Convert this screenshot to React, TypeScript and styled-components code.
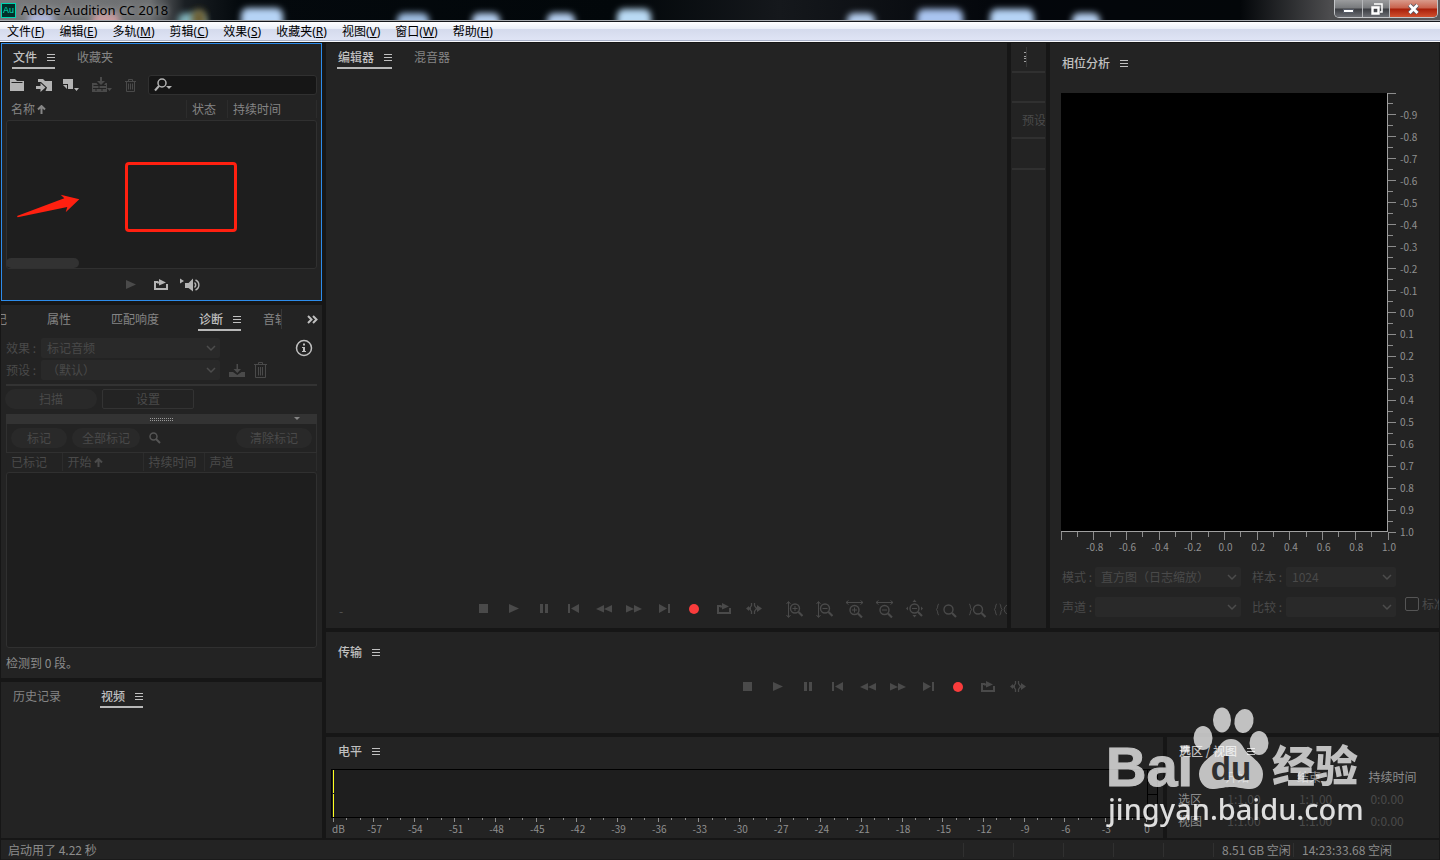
import React from "react";
import styled, { createGlobalStyle, css } from "styled-components";

const UI_FONT = `"Noto Sans CJK SC", "Noto Sans", sans-serif`;

const GlobalStyle = createGlobalStyle`
  *, *::before, *::after { box-sizing: border-box; }
  body { margin: 0; background: #161616; }
  body, button, input, select, table {
    font-family: ${UI_FONT};
    font-size: 12px;
    line-height: 20px;
  }
  button, input, select { margin: 0; padding: 0; border: 0; background: none; color: inherit; }
  svg { display: block; flex: none; }
`;

/* ---------- window frame ---------- */

const Window = styled.div`
  position: relative;
  display: flex;
  flex-direction: column;
  min-height: 100vh;
  color: #8c8c8c;
  background: #161616;
`;

const TitleBar = styled.header`
  position: relative;
  display: flex;
  align-items: center;
  height: 22px;
  padding: 0 2px 1px 1px;
  background: linear-gradient(90deg, #77797b 0, #6c6e70 150px, #1a1f23 185px, #04090d 240px, #02070a 620px, #15181c 780px, #03060b 1000px, #030609 1240px, #4c4c4e 1330px, #5a5a5c 100%);
  border-bottom: 1px solid #15171b;
  box-shadow: inset 0 -1px 0 #a6a9ad;
  overflow: hidden;
`;

const Wallpaper = styled.svg`
  position: absolute;
  left: 0;
  top: 0;
  width: 100%;
  height: 20px;
`;

const AppBadge = styled.span`
  position: relative;
  width: 15px;
  height: 15px;
  border: 1px solid #00d5b0;
  background: #01302a;
  color: #00e4bb;
  font-family: "Liberation Sans", sans-serif;
  font-size: 9px;
  line-height: 13px;
  text-align: center;
`;

const WindowTitle = styled.h1`
  position: relative;
  flex: 1;
  margin: 0 0 0 5px;
  color: #000;
  font: 400 13px/20px "Noto Sans", sans-serif;
  text-shadow: 0 0 6px rgba(255, 255, 255, 0.5);
`;

const WindowButtons = styled.div`
  position: relative;
  align-self: flex-start;
  display: flex;
  height: 18px;
  border: 1px solid #c3c5c8;
  border-top: 0;
  border-radius: 0 0 5px 5px;
  overflow: hidden;
`;

const WindowButton = styled.button<{ $close?: boolean }>`
  display: grid;
  place-items: center;
  width: ${(p) => (p.$close ? 48 : 27)}px;
  background: ${(p) =>
    p.$close
      ? "linear-gradient(#d99a8b 0, #c8614c 8px, #a81f0a 9px, #d0502e 100%)"
      : "linear-gradient(#9b9c9e 0, #77797c 8px, #3b3d42 9px, #6c6e74 100%)"};
  & + & { border-left: 1px solid #b5b7ba; }
`;

const MenuBar = styled.nav`
  display: flex;
  gap: 15px;
  height: 20px;
  padding-left: 7px;
  background: linear-gradient(#ffffff 0, #eaeef7 7px, #d4daec 7px, #dfe4f5 18px, #a9b2c9 18px, #a9b2c9 19px, #f7f8fb 19px);
`;

const MenuItem = styled.button`
  color: #000;
  font-family: "Noto Sans", "Noto Sans CJK SC", sans-serif;
  white-space: nowrap;
`;

const Workspace = styled.main`
  flex: 1;
  display: flex;
  gap: 4px;
  padding: 1px 1px 2px;
`;

const LeftColumn = styled.div`
  flex: 0 0 321px;
  min-width: 0;
  display: flex;
  flex-direction: column;
  gap: 4px;
`;

const MainColumn = styled.div`
  flex: 1;
  min-width: 0;
  display: flex;
  flex-direction: column;
  gap: 4px;
`;

const PanelRow = styled.div<{ $grow?: boolean }>`
  display: flex;
  gap: 4px;
  ${(p) => p.$grow && "flex: 1;"}
`;

const Panel = styled.section<{ $focused?: boolean; $grow?: boolean; $width?: number }>`
  display: flex;
  flex-direction: column;
  min-width: 0;
  overflow: hidden;
  background: #232323;
  ${(p) => p.$focused && css`border: 1px solid #2d8ceb;`}
  ${(p) => p.$grow && css`flex: 1;`}
  ${(p) => p.$width && css`flex: 0 0 ${p.$width}px;`}
`;

/* ---------- tabs ---------- */

const TabBar = styled.div<{ $scrolled?: boolean; $inset?: boolean }>`
  flex: none;
  display: flex;
  gap: 21px;
  height: ${(p) => (p.$inset ? 25 : 26)}px;
  padding-left: ${(p) => (p.$inset ? 10 : 11)}px;
  ${(p) => p.$scrolled && "flex: 1; padding-left: 0; overflow: hidden; justify-content: flex-end;"}
`;

const Tab = styled.button<{ $active?: boolean }>`
  flex: none;
  display: flex;
  align-items: flex-end;
  gap: 10px;
  height: 100%;
  padding-left: 1px;
  border-bottom: 2px solid ${(p) => (p.$active ? "#b8b8b8" : "transparent")};
  color: ${(p) => (p.$active ? "#c0c0c0" : "#858585")};
  font-weight: ${(p) => (p.$active ? 500 : 400)};
  white-space: nowrap;
  svg { visibility: ${(p) => (p.$active ? "visible" : "hidden")}; margin-bottom: 5px; }
`;

const PanelTitle = styled.h2<{ $tall?: boolean }>`
  display: flex;
  align-items: center;
  gap: 10px;
  margin: 0;
  padding: ${(p) => (p.$tall ? "10px 0 0 12px" : "4px 0 0 12px")};
  color: #c0c0c0;
  font-size: 12px;
  font-weight: 500;
  line-height: 20px;
`;

const TabOverflow = styled.div`
  display: flex;
  align-items: flex-start;
  height: 30px;
`;

const MoreButton = styled.button`
  flex: none;
  width: 41px;
  height: 20px;
  margin-top: 4px;
  padding-left: 25px;
  border-left: 1px solid #383838;
  color: #c0c0c0;
`;

/* ---------- shared controls ---------- */

const IconButton = styled.button<{ $dim?: boolean; $w?: number }>`
  flex: none;
  display: flex;
  align-items: center;
  justify-content: center;
  width: ${(p) => p.$w ?? 30}px;
  height: 24px;
  color: ${(p) => (p.$dim ? "#4a4a4a" : "#b4b4b4")};
`;

const RecordButton = styled(IconButton)`
  color: #f93c3c;
`;

const ListBox = styled.div<{ $height: number }>`
  position: relative;
  height: ${(p) => p.$height}px;
  margin: 0 5px;
  border: 1px solid #303030;
  border-radius: 3px;
  background: #1e1e1e;
`;

const HeaderTable = styled.table<{ $dim?: boolean }>`
  width: calc(100% - 10px);
  margin: 0 5px;
  border-collapse: collapse;
  table-layout: fixed;
  color: ${(p) => (p.$dim ? "#4a4a4a" : "#858585")};
  th {
    height: 18px;
    padding: 0 0 0 5px;
    border-right: 1px solid #2c2c2c;
    font-weight: 400;
    line-height: 18px;
    text-align: left;
    white-space: nowrap;
  }
  svg { display: inline-block; margin-left: 2px; }
`;

const SelectWrap = styled.span<{ $w: number }>`
  position: relative;
  flex: none;
  width: ${(p) => p.$w}px;
  height: 20px;
  color: #4a4a4a;
  svg { position: absolute; right: 4px; top: 6px; pointer-events: none; }
`;

const SelectBox = styled.select`
  appearance: none;
  display: block;
  width: 100%;
  height: 20px;
  padding-left: 6px;
  border-radius: 2px;
  background: #292929;
  color: #4a4a4a;
  opacity: 1;
`;

const FieldRow = styled.div<{ $gap?: number }>`
  display: flex;
  align-items: center;
  height: 20px;
  margin-top: ${(p) => p.$gap ?? 2}px;
  color: #4a4a4a;
`;

const FieldLabel = styled.label<{ $w: number }>`
  flex: none;
  width: ${(p) => p.$w}px;
  white-space: nowrap;
`;

const Pill = styled.button<{ $w: number; $outline?: boolean }>`
  flex: none;
  width: ${(p) => p.$w}px;
  height: 20px;
  color: #4a4a4a;
  ${(p) =>
    p.$outline
      ? css`border: 1px solid #333; border-radius: 2px; line-height: 18px;`
      : css`border-radius: 10px; background: #292929;`}
`;

/* ---------- files panel ---------- */

const FileToolbar = styled.div`
  display: flex;
  align-items: center;
  height: 30px;
  padding: 2px 4px 0 1px;
`;

const SearchField = styled.label`
  flex: 1;
  display: flex;
  align-items: center;
  height: 20px;
  margin-left: 5px;
  padding-left: 5px;
  border: 1px solid #303030;
  border-radius: 3px;
  background: #161616;
  color: #b4b4b4;
  input { flex: 1; min-width: 0; height: 18px; outline: 0; }
`;

const FileHeader = styled.div`
  padding: 1px 0 2px;
  margin: 0 -1px;
`;

const FileList = styled(ListBox)`
  margin: 0 4px;
`;

const ScrollThumb = styled.div`
  position: absolute;
  left: -1px;
  bottom: 0;
  width: 73px;
  height: 10px;
  border-radius: 5px;
  background: #323232;
`;

const Highlight = styled.div`
  position: absolute;
  left: 118px;
  top: 41px;
  width: 112px;
  height: 70px;
  border: 3px solid #ff2010;
  border-radius: 4px;
`;

const Arrow = styled.svg`
  position: absolute;
  left: 9px;
  top: 72px;
`;

const Preview = styled.div`
  display: flex;
  align-items: center;
  justify-content: center;
  height: 31px;
  padding-right: 4px;
`;

/* ---------- diagnostics panel ---------- */

const DiagBody = styled.div`
  padding: 1px 5px 0;
  display: flex;
  flex-direction: column;
`;

const Rule = styled.hr`
  width: 100%;
  height: 2px;
  margin: 4px 0 3px;
  border: 0;
  background: #333;
`;

const InfoButton = styled.button`
  margin: 0 4px 0 auto;
  color: #c0c0c0;
`;

const PresetTools = styled.span`
  display: flex;
  gap: 8px;
  margin-left: 9px;
`;

const ButtonLine = styled.div`
  display: flex;
  gap: 5px;
  margin-left: -1px;
`;

const Splitter = styled.div`
  display: flex;
  align-items: center;
  justify-content: center;
  position: relative;
  height: 10px;
  margin-top: 5px;
  background: #333;
`;

const Grip = styled.span`
  width: 24px;
  height: 3px;
  background:
    linear-gradient(transparent 0 1px, #333 1px 2px, transparent 2px),
    repeating-linear-gradient(90deg, #999 0 1px, transparent 1px 2px);
`;

const CollapseMark = styled.svg`
  position: absolute;
  right: 17px;
  top: 3px;
  color: #858585;
`;

const MarkBar = styled.div`
  display: flex;
  align-items: center;
  gap: 5px;
  height: 29px;
  padding: 0 4px;
  border: 1px solid #303030;
  border-top: 0;
  color: #555;
  svg { margin-left: 4px; }
  button:last-child { margin-left: auto; }
`;

const DiagHeader = styled.div`
  margin: 0 -5px;
  padding-bottom: 1px;
`;

const Detected = styled.p`
  margin: 0;
  padding: 5px;
  line-height: 20px;
`;

/* ---------- editor ---------- */

const EditorSpace = styled.div`
  flex: 1;
  min-height: 200px;
`;

const TransportLine = styled.div<{ $center?: boolean }>`
  display: flex;
  align-items: center;
  height: 24px;
  ${(p) =>
    p.$center
      ? css`justify-content: center; margin: 13px 0 34px; padding-right: 2px;`
      : css`margin-bottom: 7px; overflow: hidden;`}
`;

const TimeReadout = styled.span`
  flex: 0 0 142px;
  padding: 4px 0 0 13px;
  color: #555;
`;

const ZoomGroup = styled.span`
  display: flex;
  margin-left: 11px;
`;

const StripCell = styled.div<{ $h: number }>`
  flex: none;
  display: flex;
  align-items: center;
  height: ${(p) => p.$h}px;
  margin: 0 1px;
  padding-left: 10px;
  border-bottom: 2px solid #303030;
  color: #4a4a4a;
  white-space: nowrap;
  overflow: hidden;
`;

/* ---------- phase analysis ---------- */

const PhaseChart = styled.div`
  flex: 1;
  display: grid;
  grid-template-columns: 1fr 51px;
  grid-template-rows: 1fr 35px;
  margin: 20px 0 0 11px;
`;

const Plot = styled.div`
  background: #000;
  border-right: 1px solid #a0a0a0;
  border-bottom: 1px solid #a0a0a0;
`;

const Axis = styled.svg`
  width: 100%;
  height: 100%;
  min-height: 0;
  overflow: visible;
  stroke: #8c8c8c;
  shape-rendering: crispEdges;
  text {
    stroke: none;
    fill: #909090;
    font-family: ${UI_FONT};
    font-size: 10px;
  }
`;

const PhaseControls = styled.div`
  padding: 0 0 11px 12px;
  overflow: hidden;
  ${FieldLabel} + ${SelectWrap} { margin-right: 11px; }
`;

const CheckLabel = styled.label`
  display: flex;
  align-items: center;
  gap: 3px;
  margin: -6px 0 0 -2px;
  white-space: nowrap;
  input {
    appearance: none;
    flex: none;
    width: 14px;
    height: 14px;
    border: 1px solid #555;
    border-radius: 2px;
  }
`;

/* ---------- levels and selection ---------- */

const Meter = styled.div`
  display: flex;
  height: 49px;
  margin: 8px 5px 0;
  border: 1px solid #000;
  background: #1e1e1e;
`;

const MeterChannels = styled.div`
  flex: 1;
  display: grid;
  grid-template-rows: 1fr 1fr;
  gap: 1px;
  padding-left: 1px;
  span { border-left: 1px solid #ffff20; }
`;

const ClipLights = styled.div`
  width: 10px;
  border-left: 1px solid #000;
  display: grid;
  grid-template-rows: 1fr 1fr;
  span + span { border-top: 1px solid #000; }
`;

const LevelScale = styled.div`
  height: 20px;
  margin: 0 17px 0 7px;
`;

const SelectionTable = styled.table`
  margin: 5px 0 4px 10px;
  border-collapse: collapse;
  th, td {
    height: 22px;
    padding: 0 1px;
    font-weight: 400;
    text-align: left;
    white-space: nowrap;
    min-width: 71px;
  }
  th:first-child { min-width: 47px; }
  td { padding-left: 3px; color: #4a4a4a; }
`;

const StatusBar = styled.footer`
  display: flex;
  align-items: center;
  height: 20px;
  margin: 0 1px;
  padding: 0 0 0 7px;
  background: #232323;
  border-bottom: 1px solid #1a1a1a;
`;

const StatusCell = styled.span<{ $w: number }>`
  width: ${(p) => p.$w}px;
  height: 14px;
  padding-left: 8px;
  border-left: 1px solid #303030;
  line-height: 14px;
  white-space: nowrap;
`;

const StatusText = styled.span`
  flex: 1;
`;

const Watermark = styled.svg`
  position: absolute;
  right: 70px;
  bottom: 25px;
  pointer-events: none;
`;

/* ---------- icons ---------- */

const MenuGlyph = () => (
  <svg width="8" height="9" viewBox="0 0 8 9" stroke="currentColor" shapeRendering="crispEdges" aria-hidden="true">
    <path d="M0 1.500h8M0 4.500h8M0 7.500h8" />
  </svg>
);

const Chevron = () => (
  <svg width="10" height="8" viewBox="0 0 10 8" fill="none" stroke="#4c4c4c" strokeWidth="1.500" aria-hidden="true">
    <path d="M1 2l4 4 4-4" />
  </svg>
);

const SortArrow = () => (
  <svg width="9" height="9" viewBox="0 0 9 9" fill="none" stroke="currentColor" strokeWidth="2" aria-hidden="true">
    <path d="M4.500 9V1.500M1 4.500l3.500-3.500 3.500 3.500" />
  </svg>
);

const Glyph = ({ children }: { children: React.ReactNode }) => (
  <svg width="30" height="24" viewBox="0 0 30 24" fill="currentColor" aria-hidden="true">
    {children}
  </svg>
);

const LoopShape = () => (
  <>
    <path d="M13 8H9v9h14v-6h-2v4H11v-5h2z" />
    <path d="M14 6l7 3.500-7 3V10.500h-2V8.500h2z" />
  </>
);

const lens = (cx: number, cy: number, sign: "in" | "out" | null) => (
  <>
    <circle cx={cx} cy={cy} r="4.500" strokeWidth="1.400" />
    {sign && <path d={`M${cx - 2.5} ${cy}h5`} />}
    {sign === "in" && <path d={`M${cx} ${cy - 2.5}v5`} />}
    <path d={`M${cx + 3.5} ${cy + 3.5}l4 4`} strokeWidth="2.200" />
  </>
);

const VArrow = () => <path d="M9.500 5v15M7.500 7l2-2.500 2 2.500M7.500 18l2 2.500 2-2.500" />;
const HArrow = () => <path d="M7 5.500h17M9.500 3.500l-2.500 2 2.500 2M21.500 3.500l2.500 2-2.500 2" />;

const transport: { name: string; icon: React.ReactNode }[] = [
  { name: "停止", icon: <path d="M11 7h9v9h-9z" /> },
  { name: "播放", icon: <path d="M11 7l10 4.500L11 16z" /> },
  { name: "暂停", icon: <path d="M12 7h3v9h-3zM17 7h3v9h-3z" /> },
  { name: "移到上一个", icon: <path d="M10 7h2v9h-2zM21 7v9l-8-4.500z" /> },
  { name: "快退", icon: <path d="M16 8v7.500L8 12zM24 8v7.500L16 12z" /> },
  { name: "快进", icon: <path d="M8 8v7.500l8-3.500zM16 8v7.500l8-3.500z" /> },
  { name: "移到下一个", icon: <path d="M20 7h2v9h-2zM11 7v9l8-4.500z" /> },
  { name: "录制", icon: <circle cx="16" cy="12" r="5" /> },
  { name: "循环播放", icon: <LoopShape /> },
  {
    name: "跳过所选项目",
    icon: (
      <>
        <path
          d="M13.500 6v2.500l-2 3 2 3V17M16.500 6v2.500l2 3-2 3V17"
          fill="none"
          stroke="currentColor"
          strokeWidth="1.300"
        />
        <path d="M8 11.500l3-2.500v1.500h2v2h-2V14zM19 10.500V8l5 3.500-5 3.500v-2.500h-1v-2z" />
      </>
    ),
  },
];

const zooms: { name: string; icon: React.ReactNode }[] = [
  { name: "放大振幅", icon: <><VArrow />{lens(16, 11.5, "in")}</> },
  { name: "缩小振幅", icon: <><VArrow />{lens(16, 11.5, "out")}</> },
  { name: "放大时间", icon: <><HArrow />{lens(15.5, 13, "in")}</> },
  { name: "缩小时间", icon: <><HArrow />{lens(15.5, 13, "out")}</> },
  {
    name: "全部缩小",
    icon: (
      <>
        {lens(15.5, 11.5, "out")}
        <path d="M13.500 5l2-2.500 2 2.500zM13.500 18l2 2.500 2-2.500zM9 9.500L7 11.500 9 13.500zM22 9.500l2 2-2 2z" fill="currentColor" stroke="none" />
      </>
    ),
  },
  { name: "放大入点", icon: <><path d="M10 7c-2 0-.5 3.500-2.500 5.500 2 2 .5 5.500 2.500 5.500" />{lens(19.5, 12.5, null)}</> },
  { name: "放大出点", icon: <><path d="M10 7c2 0 .5 3.500 2.500 5.500-2 2-.5 5.500-2.500 5.500" />{lens(19, 12.5, null)}</> },
  {
    name: "缩放至选区",
    icon: (
      <path d="M8 7c-2 0-.5 3.500-2.500 5.500 2 2 .5 5.500 2.500 5.500M10.500 7c2 0 .5 3.500 2.500 5.500-2 2-.5 5.500-2.500 5.500M18 8a5 5 0 0 0 0 9" />
    ),
  },
];

const TransportButtons = () => (
  <>
    {transport.map((t) => {
      const Btn = t.name === "录制" ? RecordButton : IconButton;
      return (
        <Btn key={t.name} $dim aria-label={t.name}>
          <Glyph>{t.icon}</Glyph>
        </Btn>
      );
    })}
  </>
);

/* ---------- panels ---------- */

const Tabs = ({ names, active, inset }: { names: string[]; active: string; inset?: boolean }) => (
  <TabBar $inset={inset}>
    {names.map((n) => (
      <Tab key={n} $active={n === active}>
        {n}
        <MenuGlyph />
      </Tab>
    ))}
  </TabBar>
);

const FilesPanel = () => (
  <Panel $focused>
    <Tabs names={["文件", "收藏夹"]} active="文件" inset />
    <FileToolbar>
      <IconButton $w={27} aria-label="打开文件">
        <Glyph>
          <path d="M8 6h5l2 2h7v10H8z" />
          <path d="M9.500 9.500h11" stroke="#232323" />
        </Glyph>
      </IconButton>
      <IconButton $w={27} aria-label="导入文件">
        <Glyph>
          <path d="M9 6h5l2 2h7v10h-6.500L18 14.500 12 9H9z" />
          <path d="M7 13h4.500v-3l5 4.500-5 4.500v-3H7z" />
        </Glyph>
      </IconButton>
      <IconButton $w={28} aria-label="新建文件">
        <Glyph>
          <path d="M7 6h10v10h-5v-5H7z" />
          <path d="M7 12h4v4zM18 15h5l-2.500 3z" />
        </Glyph>
      </IconButton>
      <IconButton $w={34} $dim aria-label="插入到多轨混音中">
        <Glyph>
          <path d="M13 4h2v4h3l-4 4-4-4h3zM5 10h4.500l1.500 2H6.500v1H19v-1h-2l1.500-2H20v9H5zM20 15h5l-2.500 3z" />
          <path d="M6 15.500h13M12 13v2.500M15 15.500V18M9 15.500V18" stroke="#232323" />
        </Glyph>
      </IconButton>
      <IconButton $w={24} $dim aria-label="删除">
        <Glyph>
          <path
            d="M9 8.500h11M12.500 8V6.500h4V8M10.500 8.500v10h8v-10M12.500 10.500v6M14.500 10.500v6M16.500 10.500v6"
            fill="none"
            stroke="currentColor"
          />
        </Glyph>
      </IconButton>
      <SearchField>
        <svg width="19" height="16" viewBox="0 0 19 16" fill="none" stroke="currentColor" aria-hidden="true">
          <circle cx="8" cy="6" r="4" strokeWidth="1.500" />
          <path d="M5 9l-4 4.500" strokeWidth="2" />
          <path d="M12 9h6l-3 3z" fill="currentColor" stroke="none" />
        </svg>
        <input type="text" aria-label="搜索文件" />
      </SearchField>
    </FileToolbar>
    <FileHeader>
      <HeaderTable>
        <colgroup>
          <col />
          <col style={{ width: 41 }} />
          <col style={{ width: 89 }} />
        </colgroup>
        <thead>
          <tr>
            <th scope="col">名称<SortArrow /></th>
            <th scope="col">状态</th>
            <th scope="col">持续时间</th>
          </tr>
        </thead>
      </HeaderTable>
    </FileHeader>
    <FileList $height={149}>
      <Arrow width="66" height="28" viewBox="0 0 66 28" fill="#ff2010" aria-hidden="true">
        <path d="M1 23L48.300 5.300 44.700 1.700 63.300 6.300 49.700 19.300 51.300 14 1.700 24.300z" />
      </Arrow>
      <Highlight />
      <ScrollThumb />
    </FileList>
    <Preview>
      <IconButton $dim aria-label="试听">
        <Glyph>{transport[1].icon}</Glyph>
      </IconButton>
      <IconButton aria-label="循环试听">
        <Glyph><LoopShape /></Glyph>
      </IconButton>
      <IconButton aria-label="自动播放">
        <Glyph>
          <path d="M5 5.500l4 2.500-4 2.500zM10 10h3.500L18 5.500v13L13.500 15H10z" />
          <path d="M19.500 9.500c1.500 1.500 1.500 3.500 0 5M20.500 7c4.500 2 4.500 8 0 10" fill="none" stroke="currentColor" strokeWidth="1.400" />
        </Glyph>
      </IconButton>
    </Preview>
  </Panel>
);

const Select = ({ id, w, value }: { id: string; w: number; value: string }) => (
  <SelectWrap $w={w}>
    <SelectBox id={id} disabled>
      <option>{value}</option>
    </SelectBox>
    <Chevron />
  </SelectWrap>
);

const DiagnosticsPanel = () => (
  <Panel>
    <TabOverflow>
      <TabBar $scrolled>
        {["标记", "属性", "匹配响度", "诊断", "音轨"].map((n) => (
          <Tab key={n} $active={n === "诊断"} style={n === "音轨" ? { marginRight: -24 } : undefined}>
            {n}
            <MenuGlyph />
          </Tab>
        ))}
      </TabBar>
      <MoreButton aria-label="更多面板">
        <svg width="11" height="9" viewBox="0 0 11 9" fill="none" stroke="currentColor" strokeWidth="2" aria-hidden="true">
          <path d="M1 1l3.500 3.500L1 8M6 1l3.500 3.500L6 8" />
        </svg>
      </MoreButton>
    </TabOverflow>
    <DiagBody>
      <FieldRow>
        <FieldLabel $w={35} htmlFor="effect">效果 :</FieldLabel>
        <Select id="effect" w={179} value="标记音频" />
        <InfoButton aria-label="信息">
          <svg width="18" height="18" viewBox="0 0 18 18" fill="none" stroke="currentColor" aria-hidden="true">
            <circle cx="9" cy="9" r="7.500" strokeWidth="1.500" />
            <path d="M8 4.500h2v2H8zM7 8h3v4h1v1H7v-1h1V9H7z" fill="currentColor" stroke="none" />
          </svg>
        </InfoButton>
      </FieldRow>
      <FieldRow>
        <FieldLabel $w={35} htmlFor="preset">预设 :</FieldLabel>
        <Select id="preset" w={179} value="（默认）" />
        <PresetTools>
          <button aria-label="保存预设">
            <svg width="17" height="16" viewBox="0 0 17 16" fill="currentColor" aria-hidden="true">
              <path d="M7.500 2h1.500v5h3l-3.700 4-3.800-4h3zM0 10h4l4.300 3L12.500 10H16v5H0z" />
            </svg>
          </button>
          <button aria-label="删除预设">
            <svg width="14" height="16" viewBox="0 0 14 16" fill="none" stroke="currentColor" aria-hidden="true">
              <path d="M0 2.500h13M4.500 2V.500h4V2M1.500 3v12.500h10V3M4.500 5v8.500M6.500 5v8.500M8.500 5v8.500" />
            </svg>
          </button>
        </PresetTools>
      </FieldRow>
      <Rule />
      <ButtonLine>
        <Pill $w={92}>扫描</Pill>
        <Pill $w={92} $outline>设置</Pill>
      </ButtonLine>
      <Splitter>
        <Grip />
        <CollapseMark width="6" height="4" viewBox="0 0 6 4" fill="currentColor"><path d="M0 0h6L3 3z" /></CollapseMark>
      </Splitter>
      <MarkBar>
        <Pill $w={56}>标记</Pill>
        <Pill $w={68}>全部标记</Pill>
        <svg width="12" height="12" viewBox="0 0 12 12" fill="none" stroke="currentColor" aria-hidden="true">
          <circle cx="4.500" cy="4.500" r="3.500" strokeWidth="1.500" />
          <path d="M7 7l4 4" strokeWidth="2" />
        </svg>
        <Pill $w={76}>清除标记</Pill>
      </MarkBar>
      <DiagHeader>
        <HeaderTable $dim>
          <colgroup>
            <col style={{ width: 56 }} />
            <col style={{ width: 81 }} />
            <col style={{ width: 61 }} />
            <col />
          </colgroup>
          <thead>
            <tr>
              <th scope="col">已标记</th>
              <th scope="col">开始<SortArrow /></th>
              <th scope="col">持续时间</th>
              <th scope="col">声道</th>
            </tr>
          </thead>
        </HeaderTable>
      </DiagHeader>
    </DiagBody>
    <ListBox $height={176} />
    <Detected>检测到 0 段。</Detected>
  </Panel>
);

const PhaseAxisY = () => (
  <Axis>
    {Array.from({ length: 41 }, (_, i) => (
      <line key={i} x1="0" x2={i % 2 ? 5 : 8} y1={`${i * 2.5}%`} y2={`${i * 2.5}%`} />
    ))}
    {Array.from({ length: 20 }, (_, i) => (
      <text key={i} x="12" y={`${(i + 1) * 5}%`} dy="4">{((i - 9) / 10).toFixed(1)}</text>
    ))}
  </Axis>
);

const PhaseAxisX = () => (
  <Axis>
    {Array.from({ length: 21 }, (_, i) => (
      <line key={i} y1="0" y2={i % 2 ? 5 : 8} x1={`${i * 5}%`} x2={`${i * 5}%`} />
    ))}
    {Array.from({ length: 10 }, (_, i) => (
      <text key={i} y="19" dx="1" x={`${(i + 1) * 10}%`} textAnchor="middle">{((i - 4) / 5).toFixed(1)}</text>
    ))}
  </Axis>
);

const PhasePanel = () => (
  <Panel $width={389}>
    <PanelTitle $tall>相位分析<MenuGlyph /></PanelTitle>
    <PhaseChart>
      <Plot />
      <PhaseAxisY />
      <PhaseAxisX />
    </PhaseChart>
    <PhaseControls>
      <FieldRow $gap={0}>
        <FieldLabel $w={33} htmlFor="mode">模式 :</FieldLabel>
        <Select id="mode" w={146} value="直方图（日志缩放）" />
        <FieldLabel $w={34} htmlFor="samples">样本 :</FieldLabel>
        <Select id="samples" w={110} value="1024" />
      </FieldRow>
      <FieldRow $gap={10}>
        <FieldLabel $w={33} htmlFor="channel">声道 :</FieldLabel>
        <Select id="channel" w={146} value="" />
        <FieldLabel $w={34} htmlFor="compare">比较 :</FieldLabel>
        <Select id="compare" w={110} value="" />
        <CheckLabel>
          <input type="checkbox" disabled />
          标准化
        </CheckLabel>
      </FieldRow>
    </PhaseControls>
  </Panel>
);

const LevelsPanel = () => (
  <Panel $grow>
    <PanelTitle>电平<MenuGlyph /></PanelTitle>
    <Meter>
      <MeterChannels><span /><span /></MeterChannels>
      <ClipLights><span /><span /></ClipLights>
    </Meter>
    <LevelScale>
      <Axis>
        {Array.from({ length: 61 }, (_, i) => (
          <line key={i} x1={`${(i / 60) * 100}%`} x2={`${(i / 60) * 100}%`} y1="0" y2={i % 3 ? 2 : 4} />
        ))}
        <text x="-1" y="15">dB</text>
        {Array.from({ length: 20 }, (_, i) => (
          <text key={i} x={`${(i + 1) * 5}%`} y="15" dx="1" textAnchor="middle">{(i + 1) * 3 - 60}</text>
        ))}
      </Axis>
    </LevelScale>
  </Panel>
);

const SelectionPanel = () => (
  <Panel $width={272}>
    <PanelTitle>选区 / 视图<MenuGlyph /></PanelTitle>
    <SelectionTable>
      <thead>
        <tr>
          <th />
          <th scope="col">开始</th>
          <th scope="col">结束</th>
          <th scope="col">持续时间</th>
        </tr>
      </thead>
      <tbody>
        {["选区", "视图"].map((n) => (
          <tr key={n}>
            <th scope="row">{n}</th>
            <td>1:1.00</td>
            <td>1:1.00</td>
            <td>0:0.00</td>
          </tr>
        ))}
      </tbody>
    </SelectionTable>
  </Panel>
);

const menus: [string, string][] = [
  ["文件", "F"], ["编辑", "E"], ["多轨", "M"], ["剪辑", "C"], ["效果", "S"],
  ["收藏夹", "R"], ["视图", "V"], ["窗口", "W"], ["帮助", "H"],
];

/* x, width, top and colour of the desktop icons seen through the glass */
const blobs: [number, number, number, string][] = [
  [28, 26, 13, "#aeb6dc"], [92, 28, 13, "#c79a9e"], [178, 28, 13, "#7fb0b8"], [192, 14, 9, "#6d6136"],
  [241, 42, 8, "#b5d3f5"], [397, 32, 13, "#9dbce0"], [472, 28, 13, "#b4cdee"], [547, 28, 13, "#b4cdee"],
  [617, 34, 9, "#b9daf4"], [847, 28, 13, "#b4cdee"], [917, 46, 9, "#a9c4f0"], [990, 44, 9, "#b5d3f5"],
  [1072, 28, 13, "#b4cdee"],
];

export default function App() {
  return (
    <Window>
      <GlobalStyle />
      <TitleBar>
        <Wallpaper aria-hidden="true">
          <defs>
            <filter id="glass" x="-30%" y="-60%" width="160%" height="220%">
              <feGaussianBlur stdDeviation="3" />
            </filter>
          </defs>
          {blobs.map(([x, w, y, c]) => (
            <rect key={x} x={x} y={y} width={w} height="22" rx="7" fill={c} filter="url(#glass)" />
          ))}
        </Wallpaper>
        <AppBadge>Au</AppBadge>
        <WindowTitle>Adobe Audition CC 2018</WindowTitle>
        <WindowButtons>
          <WindowButton aria-label="最小化">
            <svg width="13" height="12" viewBox="0 0 13 12"><path d="M1.500 6.500h10v3h-10z" fill="#fff" stroke="#555a66" /></svg>
          </WindowButton>
          <WindowButton aria-label="还原">
            <svg width="13" height="12" viewBox="0 0 13 12" fill="none">
              <path d="M4 1h8v8h-2" stroke="#fff" strokeWidth="1.500" />
              <path d="M2.500 4.500h6v6h-6z" stroke="#fff" strokeWidth="2.400" />
            </svg>
          </WindowButton>
          <WindowButton $close aria-label="关闭">
            <svg width="13" height="12" viewBox="0 0 13 12" fill="none">
              <path d="M2.500 2l8 8M10.500 2l-8 8" stroke="#555a66" strokeWidth="4.500" />
              <path d="M2.500 2l8 8M10.500 2l-8 8" stroke="#fff" strokeWidth="2.800" />
            </svg>
          </WindowButton>
        </WindowButtons>
      </TitleBar>
      <MenuBar>
        {menus.map(([name, key]) => (
          <MenuItem key={key}>{name}(<u>{key}</u>)</MenuItem>
        ))}
      </MenuBar>

      <Workspace>
        <LeftColumn>
          <FilesPanel />
          <DiagnosticsPanel />
          <Panel $grow>
            <Tabs names={["历史记录", "视频"]} active="视频" />
          </Panel>
        </LeftColumn>

        <MainColumn>
          <PanelRow $grow>
            <Panel $grow>
              <Tabs names={["编辑器", "混音器"]} active="编辑器" />
              <EditorSpace />
              <TransportLine>
                <TimeReadout>-</TimeReadout>
                <TransportButtons />
                <ZoomGroup>
                  {zooms.map((z) => (
                    <IconButton key={z.name} $dim aria-label={z.name}>
                      <Glyph>
                        <g fill="none" stroke="currentColor">{z.icon}</g>
                      </Glyph>
                    </IconButton>
                  ))}
                </ZoomGroup>
              </TransportLine>
            </Panel>
            <Panel $width={35}>
              <StripCell $h={30}>
                <svg width="5" height="20" viewBox="0 0 5 20" shapeRendering="crispEdges" aria-hidden="true">
                  <path d="M2 5h2v1H2zM2 9h2v1H2zM2 11h2v1H2zM2 14h2v1H2z" fill="#a0a0a0" />
                  <path d="M4 0h1v20H4z" fill="#383838" />
                </svg>
              </StripCell>
              <StripCell $h={30} />
              <StripCell $h={36}>预设</StripCell>
              <StripCell $h={31} />
            </Panel>
            <PhasePanel />
          </PanelRow>
          <Panel>
            <PanelTitle $tall>传输<MenuGlyph /></PanelTitle>
            <TransportLine $center>
              <TransportButtons />
            </TransportLine>
          </Panel>
          <PanelRow>
            <LevelsPanel />
            <SelectionPanel />
          </PanelRow>
        </MainColumn>
      </Workspace>

      <StatusBar>
        <StatusText>启动用了 4.22 秒</StatusText>
        {[50, 50, 50, 50, 50].map((w, i) => (
          <StatusCell key={i} $w={w} />
        ))}
        <StatusCell $w={80}>8.51 GB 空闲</StatusCell>
        <StatusCell $w={98}>14:23:33.68 空闲</StatusCell>
        <StatusCell $w={48} />
      </StatusBar>

      <Watermark width="270" height="135" viewBox="0 0 270 135" fill="#fff">
        <g opacity="0.720">
          <text x="6" y="86" stroke="#fff" strokeWidth="1" fontFamily="Liberation Sans, sans-serif" fontWeight="700" fontSize="56">Bai</text>
          <ellipse cx="103" cy="38" rx="9.500" ry="12" />
          <ellipse cx="122" cy="20" rx="9" ry="12.500" />
          <ellipse cx="144" cy="21" rx="9.500" ry="12" transform="rotate(12 144 21)" />
          <ellipse cx="159" cy="43" rx="9.500" ry="12" />
          <path d="M131 39C138 39 141 43 145 50C149 56 163 62 163 74C163 84 157 90 148 89C140 88 136 87 131 87C126 87 122 88 114 89C105 90 99 82 99 74C99 62 113 56 117 50C121 43 124 39 131 39Z" />
          <text x="172" y="82" fontFamily="Noto Sans CJK SC, sans-serif" fontWeight="900" fontSize="43">经验</text>
        </g>
        <text x="131" y="80" textAnchor="middle" fill="#303030" fontFamily="Liberation Sans, sans-serif" fontWeight="700" fontSize="33">du</text>
        <text x="8" y="120" opacity="0.850" fontFamily="Noto Sans, sans-serif" fontWeight="500" fontSize="29">jingyan.baidu.com</text>
      </Watermark>
    </Window>
  );
}
